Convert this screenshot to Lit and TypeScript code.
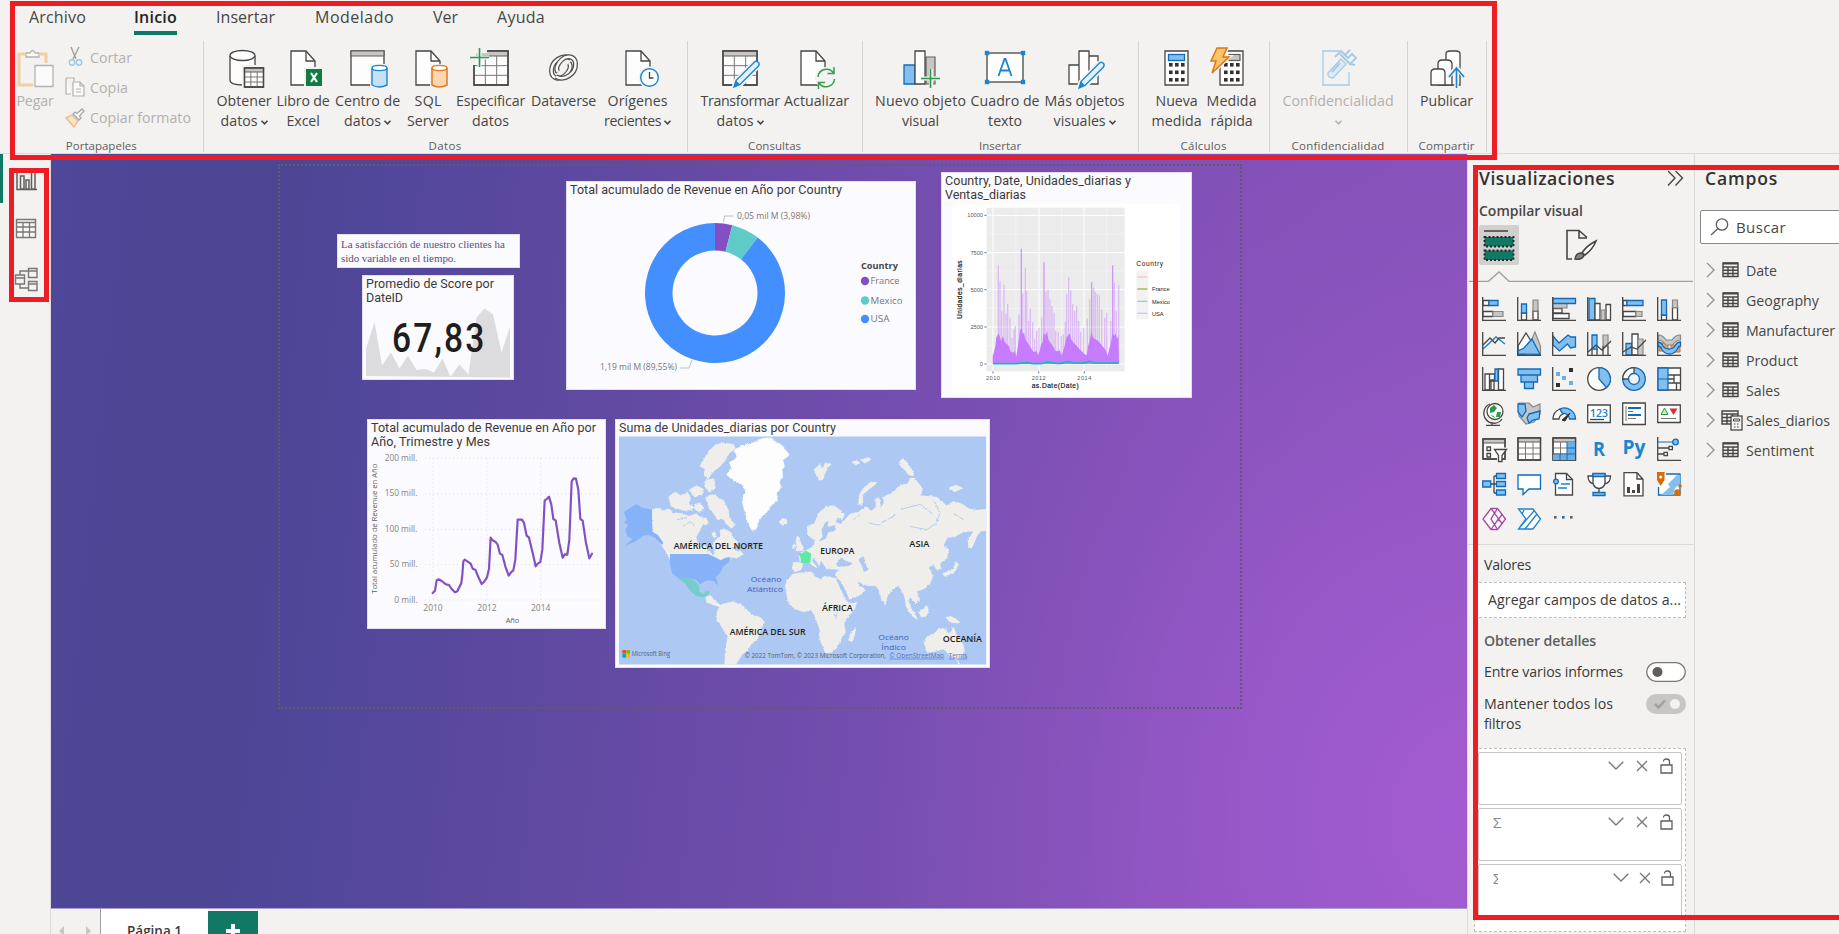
import { LitElement, html, svg, css, nothing } from "lit";
import { customElement, property } from "lit/decorators.js";
import { styleMap } from "lit/directives/style-map.js";

/** Single line of text whose tracking is computed so that it takes `w` pixels. */
@customElement("fit-text")
class FitText extends LitElement {
  @property({ type: Number }) w = 0;
  static styles = css`
    :host { display: inline-block; white-space: nowrap; }
  `;
  render() { return html`<slot></slot>`; }
  firstUpdated() {
    const n = (this.textContent || "").trim().length;
    const natural = this.getBoundingClientRect().width;
    if (n > 1 && this.w) this.style.letterSpacing = `${((this.w - natural) / n).toFixed(3)}px`;
  }
}

const fit = (t: string, w: number) => html`<fit-text .w=${w}>${t}</fit-text>`;

const table = (x: number, y: number, w: number, h: number, head = 6) => svg`
  <path class="w" d="M${x} ${y}h${w}v${h}h${-w}z"/>
  <path class="gg" d="M${x} ${y}h${w}v${head}h${-w}z"/>
  <path class="k t" d="M${x} ${y + head + (h - head) / 3}h${w}M${x} ${y + head + (h - head) * 2 / 3}h${w}M${x + w / 3} ${y + head}v${h - head}M${x + w * 2 / 3} ${y + head}v${h - head}"/>
  <path class="k" d="M${x} ${y}h${w}v${h}h${-w}z"/>`;
const pencil = svg`<path d="M35 14.500L16 34l-2 6 6-2L39 18" fill="none" stroke="#f3f2f1" stroke-width="5"/><path d="M34.500 15q1.500-1.500 3.500 0t.5 4L20 37.500l-6 2.500 2-6.500z" fill="#e3f0fa" stroke="#1a86d0" stroke-width="1.400"/><path d="M14 40l2-6.500 4 4z" fill="#1a86d0"/>`;
const calc = (x: number) => svg`<path class="w" d="M${x} 3h23v34h-23z"/>${[16, 23.5, 31].map(y => [4, 10, 16].map(d => svg`<rect x=${x + d} y=${y - 1} width="3.600" height="3.600" fill="#323130"/>`))}`;
const doc = svg`<path class="w" d="M4 3h15l9 10v24H4z"/><path class="k" d="M19 3v10h9"/>`;
const swirl = "M27 10.500C19 5.500 7 13 7.500 23.500c.5 7.500 8.500 8.500 13.500 4 5.500-5 6.500-10 4-12.500";

const RI: Record<string, unknown> = {
  pegar: svg`<path d="M10 6H4v31h14M25 6h6v9" fill="none" stroke="#f2cfa3" stroke-width="3"/><path d="M11 9V5h4q2.500-5 5 0h4v4z" fill="#fafafa" stroke="#b5b3b1" stroke-width="1.300"/><path d="M20 17.500h18v21H20z" fill="#fafafa" stroke="#b5b3b1" stroke-width="1.300"/>`,
  obtener: svg`<path class="w" d="M6 8v24q0 5 13 5 12 0 12-5V8"/><ellipse class="w" cx="18.500" cy="7.500" rx="12.500" ry="5"/><path d="M18 17h22v24H18z" fill="#f3f2f1"/>${table(20.5, 20, 19, 19, 4)}`,
  excel: svg`<path class="w" d="M8 3h15l9 10v24H8z" stroke="#797775"/><path class="k" d="M23 3v10h9"/><rect x="22" y="20" width="18" height="19" fill="#107c41" stroke="#f3f2f1" stroke-width="2"/><path d="M28 25l6 9M34 25l-6 9" stroke="#fff" stroke-width="2.200"/>`,
  centro: svg`<path class="w" d="M3 3h33v34H3z"/><path class="gg" d="M3 3h33v5H3z"/><path d="M22 16h20v24H22z" fill="#f3f2f1"/><path d="M24 20v17q7 4 15 0V20" fill="#c7e0f4" stroke="#1a86d0" stroke-width="1.400"/><ellipse cx="31.500" cy="20" rx="7.500" ry="2.600" fill="#fff" stroke="#1a86d0" stroke-width="1.400"/>`,
  sql: svg`<path class="w" d="M8 3h15l9 10v24H8z"/><path class="k" d="M23 3v10h9"/><path d="M22 16h20v24H22z" fill="#f3f2f1"/><path d="M24 20v17q7 4 15 0V20" fill="#fbd6b0" stroke="#e07b1a" stroke-width="1.500"/><ellipse cx="31.500" cy="20" rx="7.500" ry="2.600" fill="#fff" stroke="#e07b1a" stroke-width="1.400"/>`,
  espec: svg`${table(3, 3, 34, 34, 5)}<path d="M0 0h16v5H0zM0 5h5v12H0z" fill="#f3f2f1"/><path d="M8.500 0v19M0 9.500h18" stroke="#f3f2f1" stroke-width="4"/><path d="M8.500 0v19M-1 9.500h19" stroke="#2b9a4b" stroke-width="1.600"/>`,
  dataverse: svg`<g fill="none"><path d=${swirl} stroke="#55524f" stroke-width="5"/><path d=${swirl} stroke="#fbfbfb" stroke-width="2.400"/><g transform="rotate(180 19.500 19.500)"><path d=${swirl} stroke="#55524f" stroke-width="5"/><path d=${swirl} stroke="#fbfbfb" stroke-width="2.400"/></g></g>`,
  origenes: svg`<path class="w" d="M8 3h15l9 10v24H8z"/><path class="k" d="M23 3v10h9"/><circle cx="31.500" cy="29.500" r="11" fill="#f3f2f1"/><circle cx="31.500" cy="29.500" r="8.800" fill="#fafdff" stroke="#1a86d0" stroke-width="1.400"/><path class="k" d="M31.500 24v6h4"/>`,
  transformar: svg`${table(3, 3, 34, 34, 5)}<g transform="translate(0 -1)">${pencil}</g>`,
  actualizar: svg`${doc}<circle cx="29" cy="30" r="11" fill="#f3f2f1"/><path d="M21 29a8.500 8.500 0 0 1 15.500-4M37.500 31a8.500 8.500 0 0 1-15.500 4M37 19v6.500h-6.500M21.500 41v-6.500H28" fill="none" stroke="#3a9b50" stroke-width="1.500"/>`,
  nuevo: svg`<path class="b" d="M3 17h11v19H3z"/><path class="gg" d="M25 9h9v27h-9z" stroke="#797775"/><path class="w" d="M14 3h10v33H14z"/><path d="M20 30.500h20M30 21v20" stroke="#f3f2f1" stroke-width="4"/><path d="M20 30.500h19M29.500 21v19" stroke="#2b9a4b" stroke-width="1.600"/>`,
  cuadro: svg`<rect class="w" x="2" y="5" width="36" height="29"/>${[[2, 5], [38, 5], [2, 34], [38, 34]].map(p => svg`<rect x=${p[0] - 2.2} y=${p[1] - 2.2} width="4.400" height="4.400" fill="#1a86d0"/>`)}<path d="M13.500 28l6-17h1l6 17M15.500 22.500h9" fill="none" stroke="#1a86d0" stroke-width="1.800"/>`,
  mas: svg`<path class="w" d="M4 17h10v19H4zM24 8h9v28h-9zM14 3h10v33H14z"/>${pencil}`,
  nueva: svg`${calc(8)}<rect class="b" x="11.500" y="6.500" width="16" height="6"/>`,
  rapida: svg`${calc(8)}<rect class="gg" x="17" y="6.500" width="11" height="6" stroke="#797775"/><path d="M5 0h10l-4 9h6L0 25l4-12H-1z" stroke="#f3f2f1" stroke-width="4"/><path d="M5 0h10l-4 9h6L0 25l4-12H-1z" fill="#fbc36b" stroke="#d97a10" stroke-width="1.500"/>`,
  conf: svg`<g fill="none" stroke="#a6cbe4" stroke-width="1.300"><path d="M21 3H5v34h26V24"/><path d="M10 25l13-14 5 5-13 14q-6 0-5-5z" fill="#dcebf5"/><path d="M14 24l8-9M17 9l6-6 5 5M22 6l10 10 6-6-4-4-4 4-3-3 5-5M32 16l5 1" stroke-width="2"/></g>`,
  publicar: svg`<path class="w" d="M19 37V6q0-3 4-3h6q4 0 4 3v31z"/><path class="w" d="M11 37V16q0-4 4-4h5q5 0 5 4v21z"/><path class="w" d="M4 37V25q0-4 4-4h6q4 0 4 4v12z"/><path d="M29.500 41V19M21 29l8.500-9.500 8.500 9.500" fill="none" stroke="#f3f2f1" stroke-width="4.500"/><path d="M29.500 40V20M22 29l7.500-9 7.500 9" fill="none" stroke="#1a86d0" stroke-width="1.600"/>`,
};

type Btn = { w: number; i: string; a: [string, number]; b?: [string, number]; drop?: boolean; off?: boolean };
const GROUPS: { w: number; pad: number; label: [string, number]; btns: Btn[] }[] = [
  { w: 484, pad: 10, label: ["Datos", 33], btns: [
    { w: 61, i: "obtener", a: ["Obtener", 55], b: ["datos", 37], drop: true },
    { w: 57, i: "excel", a: ["Libro de", 53], b: ["Excel", 33] },
    { w: 72, i: "centro", a: ["Centro de", 65], b: ["datos", 37], drop: true },
    { w: 49, i: "sql", a: ["SQL", 27], b: ["Server", 42] },
    { w: 76, i: "espec", a: ["Especificar", 69], b: ["datos", 37] },
    { w: 70, i: "dataverse", a: ["Dataverse", 65] },
    { w: 78, i: "origenes", a: ["Orígenes", 60], b: ["recientes", 57], drop: true }] },
  { w: 175, pad: 12, label: ["Consultas", 53], btns: [
    { w: 81, i: "transformar", a: ["Transformar", 79], b: ["datos", 37], drop: true },
    { w: 72, i: "actualizar", a: ["Actualizar", 65] }] },
  { w: 276, pad: 9, label: ["Insertar", 42], btns: [
    { w: 98, i: "nuevo", a: ["Nuevo objeto", 91], b: ["visual", 37] },
    { w: 71, i: "cuadro", a: ["Cuadro de", 69], b: ["texto", 34] },
    { w: 88, i: "mas", a: ["Más objetos", 80], b: ["visuales", 52], drop: true }] },
  { w: 131, pad: 11, label: ["Cálculos", 46], btns: [
    { w: 54, i: "nueva", a: ["Nueva", 42], b: ["medida", 50] },
    { w: 56, i: "rapida", a: ["Medida", 50], b: ["rápida", 42] }] },
  { w: 138, pad: 9, label: ["Confidencialidad", 93], btns: [
    { w: 119, i: "conf", a: ["Confidencialidad", 111], b: ["", 0], drop: true, off: true }] },
  { w: 79, pad: 8, label: ["Compartir", 56], btns: [
    { w: 62, i: "publicar", a: ["Publicar", 53] }] },
];

const ax = svg`<path class="k" d="M.7 0V23.300H24"/>`;
const VI = [
  svg`<path class="w" d="M1 3.500h6v5H1zM1 14.500h10v5H1z"/><path class="b" d="M7 3.500h9v5H7z"/><path class="g" d="M11 14.500h10v5H11z"/>${ax}`,
  svg`<path class="w" d="M4.500 16h5v7h-5zM16 14h5v9h-5z"/><path class="b" d="M4.500 7h5v9h-5z"/><path class="g" d="M16 3h5v11h-5z"/>${ax}`,
  svg`<path class="w" d="M1 11.500h9v4.500H1zM1 16.500h16v5H1z"/><path class="g" d="M1 6.500h14v4.500H1z"/><path class="b" d="M1 1.500h22.500v5H1z"/>${ax}`,
  svg`<path class="b" d="M2 1.500h6v21.500H2z"/><path class="w" d="M8 6.500h5v16.500H8zM19 7.500h4.500v15.500H19z"/><path class="g" d="M14 13h4v10h-4z"/>${ax}`,
  svg`<path class="w" d="M1 3.500h4v5H1zM1 14.500h13v5H1z"/><path class="b" d="M5 3.500h16v5H5z"/><path class="g" d="M14 14.500h6v5h-6z"/>${ax}`,
  svg`<path class="w" d="M4.500 18h5v5h-5zM15.500 10.500h5v12.500h-5z"/><path class="b" d="M4.500 3h5v15h-5z"/><path class="g" d="M15.500 3h5v7.500h-5z"/>${ax}`,
  svg`<path d="M1 17L14 5l9 7" fill="none" stroke="#1a86d0" stroke-width="1.500"/><path class="k" d="M1 13l7-7 5 5 4-5h6"/>${ax}`,
  svg`<path class="g" d="M9 20L18 0l5.500 14V22z"/><path class="w" d="M1 14L9 1l8 13-8 8H1z"/><path class="b" d="M1 22v-3l6-3 8-9 8 15.300z"/>${ax}`,
  svg`<path class="b" d="M1 4l6 7 9-8 3 2h4.500v10l-5 1-3-4-8 7-6.500-6z"/>${ax}`,
  svg`<path class="b" d="M5 3h5v14H5z"/><path class="g" d="M16 3h5v11h-5z"/><path class="k" d="M5 17v6M10 17v6M16 14v9M21 14v9M1 20l8-7 6 5 9-9"/>${ax}`,
  svg`<path class="b" d="M4 11.500h6v11.500H4z"/><path class="w" d="M10 2h6v21h-6z"/><path class="g" d="M16 7h5v16h-5z"/><path class="k" d="M1 20l8-5 6 2 9-9"/>${ax}`,
  svg`<path d="M2 11h9v8H2zM14 13h9v7h-9z" fill="#f3a14f" stroke="#d86b0b"/><path class="g" d="M1 3q5 0 8 5h6q3-5 8.500-5v5q-4 0-8 5H9Q5 8 1 8z"/><path class="b" d="M1 10q3 0 5 4 2 3 6 3t6-3q2-4 5.500-4v4q-2 0-3 3-3 5-8 5t-8-5q-1-3-3.500-3z"/>${ax}`,
  svg`<path class="w" d="M3 7h4.500v16H3zM7.500 7h5v7h-5zM16.500 2h5v21h-5zM9 13h3v10H9z"/><path class="b" d="M13 2h3v12h-3z"/>${ax}`,
  svg`<path class="b" d="M1 2h22.500v6H1zM4 8h16.500v7H4zM7.500 15h9v6.500h-9z"/>`,
  svg`<rect x="17" y="1" width="4" height="4" fill="#323130"/><rect x="4" y="5" width="4" height="4" fill="#69afe5"/><rect x="10" y="9" width="4" height="4" fill="#69afe5"/><rect x="17" y="14" width="4" height="4" fill="#69afe5"/><rect x="4" y="16" width="4" height="4" fill="#323130"/>${ax}`,
  svg`<circle class="w" cx="12" cy="12" r="11.300"/><path class="b" d="M12 .7A11.300 11.300 0 0 1 19.500 20.500L12 12z"/>`,
  svg`<circle class="b" cx="12" cy="12" r="11.300"/><path class="w" d="M12 .7A11.300 11.300 0 0 0 .7 12H6.500A5.500 5.500 0 0 1 12 6.500z"/><circle cx="12" cy="12" r="5.500" fill="#f3f2f1" stroke="#0f6cbd" stroke-width="1.300"/>`,
  svg`<path class="w" d="M1 1h22.500v22H1z"/><path class="k" d="M11 8h12M11 16h12M17 8v8M19.500 16v7M11 12h6"/><path class="b" d="M1 1h10v22H1z"/><path d="M1 12h10" stroke="#0f6cbd"/>`,
  svg`<path class="k" d="M8 2a10 10 0 1 0 12 15M10 20v3M4 23.300h14"/><circle cx="13" cy="9.500" r="8" fill="#fff" stroke="#484644" stroke-width="1.300"/><path d="M8 6l4-3 3 3-3 4-4 1zM15 10l4 0-1 5-4 0zM8 13l4 1 1 2z" fill="#2b9a4b"/>`,
  svg`<path class="g" d="M2 1h10l4 4 7-3v10l-6 8-8 2-7-8z"/><path class="b" d="M1 2h7l1 7-4 6-4-5zM12 12l11-3-1 8-6 1-4 3-2-5z"/>`,
  svg`<path class="w" d="M1 17A11 11 0 0 1 8 7l3 5a6 6 0 0 0-4 5z"/><path class="b" d="M8 7a11 11 0 0 1 15.500 10h-6a6 6 0 0 0-7-5.500z"/><path d="M10 18l8-7-5 8z" fill="#323130" stroke="#323130"/>`,
  svg`<path class="w" d="M.7 3h22.600v17.500H.7z"/><text x="12" y="14.800" text-anchor="middle" textLength="18" font-size="10.500" font-weight="600" fill="#1a86d0">123</text><path class="k" d="M3 17.500h14" stroke="#797775"/>`,
  svg`<path class="w" d="M.7 1h22.600v21.500H.7z"/><path class="k t" d="M4 4v15" stroke="#797775"/><path d="M6 6h13M6 13h13" stroke="#0f6cbd" stroke-width="2"/><path class="k t" d="M6 9.500h5M6 16.500h8"/>`,
  svg`<path class="w" d="M.7 3h22.600v17.500H.7z"/><path d="M4 12.500L7.500 6l3.500 6.500z" fill="#c9e6cf" stroke="#2b9a4b"/><path d="M12.500 6.500h8L16.500 13z" fill="#d13438"/><path class="k t" d="M4 16.500h15"/>`,
  svg`<path class="w" d="M1 2h22v20H1z"/><path class="gg" d="M1 2h22v4H1z"/><path class="k" d="M1 2h22v20H1zM5 10h3.500v3.500H5zM5 16.500h3.500V20H5z" stroke-width="1"/><path d="M11 10.500h15L20 18v8h-5v-8z" fill="#f3f2f1"/><path class="w" d="M12.500 12.500h12l-4.500 6v6h-3.500v-6z"/>`,
  svg`${table(1, 1, 22.5, 22, 4)}`,
  svg`${table(1, 1, 22.5, 22, 4)}<path d="M15 5h8v18H1v-5h14z" fill="#69afe5"/><path d="M15 5v18M8 17v6M15 11h8M1 17h22" stroke="#0f6cbd"/>`,
  svg`<text x="12" y="19" text-anchor="middle" textLength="12" lengthAdjust="spacingAndGlyphs" font-size="20" font-weight="700" fill="#1a86d0">R</text>`,
  svg`<text x="12" y="17" text-anchor="middle" textLength="23" lengthAdjust="spacingAndGlyphs" font-size="19" font-weight="700" fill="#1a86d0">Py</text>`,
  svg`${ax}<path d="M1 5h16" stroke="#0f6cbd"/><circle cx="18.500" cy="5" r="2.800" class="b"/><path class="k" d="M1 11h11M1 17h6M12 9.300h3.400v3.400H12zM7 15.300h3.400v3.400H7z" stroke="#797775"/>`,
  svg`<path class="k" d="M8 12h4M12 4v17M12 4h3M12 12h3M12 21h3"/><path class="b" d="M.7 9h8v6h-8zM14.500 1.500h9v5h-9zM14.500 9.500h9v5h-9zM14.500 18h9v5h-9z"/>`,
  svg`<path d="M1 3h22.500v14H12l-6 5.500V17H1z" fill="#fff" stroke="#0f6cbd" stroke-width="1.300"/>`,
  svg`<path class="w" d="M3.500 1.500h11l6 6v15.500h-17z"/><path class="k" d="M14.500 1.500v6h6"/><circle cx="4" cy="9.500" r="2.300" class="b"/><path d="M9 12h9M6 16h9" stroke="#1a86d0" stroke-width="1.300"/>`,
  svg`<path class="w" d="M6 2h12v9q-1 5-6 5.500Q7 16 6 11zM6 4H1q0 7 6 8M18 4h5.500q0 7-6 8M12 16.500v4"/><path class="b" d="M6 1.500h12v3H6zM6 20.500h12v3H6z"/>`,
  svg`<path class="w" d="M2 .7h13l6 6.500v16.600H2z" stroke-width="2"/><path class="k" d="M15 1v6h6"/><path d="M5 15h3v6H5zM10 18h3v3h-3zM15 12h3v9h-3z" fill="#484644"/>`,
  svg`<path d="M9 2h14v21H1.500V15" fill="#fff" stroke="#0f6cbd" stroke-width="1.300"/><path d="M20 3l-9 9 2 3-9 8h12l2-7 5-4V3z" fill="#83beec"/><path d="M0 0h7.500v8L3.700 14 0 8z" fill="#d86b0b"/><circle cx="3.700" cy="5" r="1.500" fill="#fff"/><circle cx="20.500" cy="20.500" r="3.300" fill="#d86b0b"/><circle cx="23" cy="14" r="1.800" fill="#d86b0b"/>`,
  svg`<g fill="#fdf8fd" stroke="#a349a4" stroke-width="1.300"><path d="M9 1.500h6.500L23.500 12l-8 10.500H9L1 12z"/><path d="M9 1.500l3.500 4.500-3.500 6 3.500 5.500L9 22.500M15.500 1.500L9 12l6.500 10.500M12.500 6l4 6-4 5.500M12.500 6l3-4.500M16.500 12l4-5M16.500 12l4 5"/></g>`,
  svg`<g fill="#fff" stroke="#1f83d8" stroke-width="1.300"><path d="M1.500 2h14.500l7.500 10-7.500 10H1.500L9 12z"/><path d="M3 20L17 4M8 22L20 7M5 7l2-4" fill="none"/></g>`,
  svg`<rect x="2" y="9" width="2.600" height="2.600" fill="#605e5c"/><rect x="10" y="9" width="2.600" height="2.600" fill="#2b6a9b"/><rect x="18" y="9" width="2.600" height="2.600" fill="#605e5c"/>`,
];

const FIELDS: [string, number][] = [["Date", 31], ["Geography", 73], ["Manufacturer", 89], ["Product", 52], ["Sales", 34], ["Sales_diarios", 84], ["Sentiment", 68]];

const SPIKES = [[236, 318], [241, 367], [246, 455], [253, 377], [259, 462], [264, 433], [271, 475], [277, 535], [283, 510], [287, 500], [298, 465], [305, 268], [309, 403], [317, 325], [321, 395], [327, 485], [332, 447], [339, 488], [345, 540], [351, 515], [358, 505], [366, 475], [373, 308], [379, 397], [385, 390], [391, 420], [397, 440], [403, 460], [408, 515], [416, 518], [425, 530], [431, 525], [437, 487], [441, 405], [447, 354], [453, 393], [459, 435], [465, 455], [471, 440], [477, 485], [483, 518], [492, 505], [503, 478], [510, 420], [516, 369], [522, 387], [527, 397], [533, 403], [539, 408], [546, 450], [555, 475], [561, 460], [573, 485], [579, 318], [584, 370], [590, 455], [597, 377]];

@customElement("app-root")
class AppRoot extends LitElement {
  static styles = css`
    :host { display: block; width: 1839px; height: 934px; overflow: hidden; position: relative; background: #f3f2f1; color: #484644; font-family: "Open Sans", "Noto Sans", sans-serif; font-size: 14px; }
    * { box-sizing: border-box; }
    svg { display: block; overflow: visible; flex: none; }
    svg.cut { overflow: hidden; }
    .w { fill: #fdfdfd; stroke: #484644; stroke-width: 1.3; }
    .k { fill: none; stroke: #484644; stroke-width: 1.3; }
    .t { stroke-width: 1; stroke: #797775; }
    .gg { fill: #c8c6c4; stroke: #605e5c; stroke-width: 1.2; }
    .g { fill: #c8c6c4; stroke: #8a8886; stroke-width: 1.2; }
    .b { fill: #83beec; stroke: #0f6cbd; stroke-width: 1.3; }

    .head { height: 154px; display: flex; flex-direction: column; border-bottom: 1px solid #dddbd9; }
    .tabs { height: 41px; display: flex; padding: 5px 0 0 29px; font-size: 16px; line-height: 24px; color: #484644; }
    .tab { height: 30px; margin-right: 39px; }
    .tab.mod { margin-left: 1px; }
    .tab.on { margin-left: 9px; font-weight: 600; color: #252423; border-bottom: 4px solid #117865; }
    .ribbon { height: 111px; display: flex; }
    .group { border-right: 1px solid #d5d3d1; display: flex; flex-direction: column; flex: none; }
    .row { height: 95px; display: flex; }
    .glabel { text-align: center; font-size: 11.500px; line-height: 20px; height: 16px; color: #605e5c; }
    .clip { width: 203.600px; }
    .btn { display: flex; flex-direction: column; align-items: center; padding-top: 7px; font-size: 14.200px; line-height: 20px; }
    .icon { margin-bottom: 3px; }
    .line { display: flex; align-items: center; gap: 3px; height: 20px; }
    .line svg { margin-top: 2px; }
    .off { color: #b3b0ad; }
    .paste { width: 42px; margin-left: 14px; }
    .cmds { margin-left: 9px; display: flex; flex-direction: column; color: #b3b0ad; padding-top: 1px; }
    .cmd { height: 30.300px; display: flex; align-items: center; gap: 5px; font-size: 14.200px; }

    .body { height: 780px; display: flex; }
    .nav { width: 51px; border-right: 1px solid #dcdad8; display: flex; flex: none; }
    .mark { width: 3px; height: 49px; background: #117865; }
    .views { padding: 14px 0 0 12px; display: flex; flex-direction: column; gap: 21px; }
    .center { width: 1416px; display: flex; flex-direction: column; flex: none; }
    .canvas { height: 755px; flex: none; position: relative; background: radial-gradient(ellipse 42% 95% at 100% 88%, rgba(165, 92, 210, .95) 0%, rgba(163, 92, 209, .7) 32%, rgba(160, 90, 205, .28) 68%, rgba(160, 90, 205, 0) 100%), linear-gradient(96deg, #4f4799 0%, #4b4592 14%, #51479a 22%, #5c499f 34%, #6a4ba8 48%, #784fb1 63%, #8251b8 80%, #8653ba 100%); border-bottom: 1px solid #a79fd0; }
    .page { position: absolute; left: 227px; top: 10px; width: 964px; height: 545px; border: 2px dotted #605b66; }
    .card { position: absolute; background: #fbfafe; border: 1px solid #e3def2; font-family: Roboto, sans-serif; font-size: 12.500px; line-height: 13.500px; color: #3b3937; padding: 1px 3px; display: flex; flex-direction: column; align-items: flex-start; }
    .card svg.chart { position: absolute; left: -1px; top: -1px; }
    .c-note { left: 286px; top: 80px; width: 183px; height: 34px; font-family: "Liberation Serif", serif; font-size: 11px; line-height: 14px; color: #57527a; padding: 2px 3px; }
    .c-score { left: 311px; top: 121px; width: 152px; height: 105px; }
    .c-donut { left: 515px; top: 27px; width: 350px; height: 209px; }
    .c-r { left: 890px; top: 18px; width: 251px; height: 226px; }
    .c-line { left: 316px; top: 265px; width: 239px; height: 210px; }
    .c-map { left: 564px; top: 265px; width: 375px; height: 249px; }
    .pages { height: 25px; flex: none; overflow: hidden; display: flex; font-size: 13.500px; font-weight: 600; color: #3b3a39; }
    .arrows { width: 50px; padding: 17px 0 0 8px; border-right: 1px solid #a19f9d; }
    .ptab { width: 107px; background: #fff; text-align: center; line-height: 20px; padding-top: 12px; }
    .plus { width: 50px; margin-top: 2px; background: #117865; padding: 13px 0 0 18px; }

    .vis { width: 228px; flex: none; height: 780px; border-left: 1px solid #dcdad8; border-right: 1px solid #dcdad8; display: flex; flex-direction: column; }
    .vis > * { flex: none; }
    .vh { height: 45px; padding: 11px 10px 0 11px; display: flex; justify-content: space-between; font-size: 17.500px; font-weight: 600; line-height: 27px; color: #323130; }
    .vs { height: 26px; padding-left: 11px; font-size: 14px; font-weight: 600; line-height: 24px; }
    .modes { height: 46px; display: flex; padding-left: 11px; gap: 47px; }
    .mode { width: 40px; height: 40px; background: #d2d0ce; border-radius: 2px; padding: 4px; }
    .grid { height: 262px; padding: 15px 0 0 14px; display: grid; grid-template-columns: repeat(6, 24px); grid-auto-rows: 24px; gap: 11px; }
    .wells { border-top: 1px solid #dcdad8; display: flex; flex-direction: column; padding: 10px 8px 0 6px; font-size: 14.200px; line-height: 20px; color: #3b3a39; }
    .wells > * { flex: none; }
    .lab { padding-left: 10px; height: 27px; }
    .drop { height: 36px; background: #fff; border: 1.500px dashed #c0bebc; padding: 7px 0 0 13px; }
    .h { font-weight: 600; margin-top: 13px; height: 31px; color: #605e5c; }
    .opt { display: flex; justify-content: space-between; padding-left: 10px; height: 32px; }
    .opt.tall { height: 54px; }
    .stack { height: 184px; border: 1.500px dashed #c0bebc; background: #fff; padding: 3px; display: flex; flex-direction: column; gap: 3px; }
    .item { height: 53px; border: 1px solid #c8c6c4; border-radius: 2px; display: flex; flex: none; padding-top: 5px; justify-content: space-between; }
    .sum { font-size: 15px; line-height: 14px; padding: 1px 0 0 14px; color: #8a8886; }
    .tools { display: flex; gap: 12px; padding-right: 8px; align-items: center; height: 15px; margin-left: auto; }
    .tools.narrow { gap: 10px; padding-right: 7px; }
    .cutoff { width: 19px; overflow: hidden; }

    .fields { width: 144px; flex: none; padding-left: 5px; display: flex; flex-direction: column; overflow: hidden; }
    .fh { height: 56px; padding: 11px 0 0 5px; font-size: 17.500px; font-weight: 600; line-height: 27px; color: #323130; flex: none; }
    .search { width: 160px; height: 34px; background: #fff; border: 1px solid #8a8886; border-radius: 2px; display: flex; align-items: center; gap: 7px; padding-left: 9px; font-size: 15px; flex: none; }
    .list { padding-top: 11px; }
    .f { height: 30px; display: flex; align-items: center; padding-left: 6px; font-size: 14.200px; }
    .chev { margin-right: 6px; }
    .ic { width: 24px; margin-left: 1px; }

    .frame { position: absolute; border: 5px solid #ee1c25; }
    .fr1 { left: 10px; top: 1px; width: 1487px; height: 159px; }
    .fr2 { left: 9px; top: 168px; width: 40px; height: 134px; }
    .fr3 { left: 1473px; top: 165px; width: 380px; height: 755px; }
  `;

  button(b: Btn) {
    return html`<div class="btn ${b.off ? "off" : ""}" style=${styleMap({ width: `${b.w}px` })}>
      <svg class="icon" width="40" height="40" viewBox="0 0 40 40">${RI[b.i]}</svg>
      <div class="line">${fit(b.a[0], b.a[1])}</div>
      ${b.b ? html`<div class="line">${b.b[0] ? fit(b.b[0], b.b[1]) : nothing}${b.drop ? html`<svg width="7" height="5" viewBox="0 0 7 5"><path d="M.5 .8L3.500 3.800 6.500 .8" fill="none" stroke="currentColor" stroke-width="1.600"/></svg>` : nothing}</div>` : nothing}
    </div>`;
  }

  head() {
    const tabs: [string, number, string][] = [["Archivo", 57, ""], ["Inicio", 43, "on"], ["Insertar", 59, ""], ["Modelado", 79, "mod"], ["Ver", 25, ""], ["Ayuda", 48, ""]];
    return html`<div class="head">
      <div class="tabs">${tabs.map(t => html`<div class="tab ${t[2]}">${fit(t[0], t[1])}</div>`)}</div>
      <div class="ribbon">
        <div class="group clip">
          <div class="row">
            <div class="btn off paste"><svg class="icon" width="40" height="40" viewBox="0 0 40 40">${RI.pegar}</svg><div class="line">${fit("Pegar", 37)}</div></div>
            <div class="cmds">
              <div class="cmd"><svg width="20" height="20" viewBox="0 0 20 20"><path d="M6 0l5 12M14 0L8 12" stroke="#a19f9d" stroke-width="1.400"/><circle cx="7" cy="15.500" r="2.700" fill="none" stroke="#9cc8e6" stroke-width="1.400"/><circle cx="14" cy="15.500" r="2.700" fill="none" stroke="#9cc8e6" stroke-width="1.400"/></svg>${fit("Cortar", 42)}</div>
              <div class="cmd"><svg width="20" height="20" viewBox="0 0 20 20" fill="#fafafa" stroke="#b3b0ad" stroke-width="1.200"><path d="M1 1h8v3M1 1v16h5"/><path d="M8 5h7l4 4v10H8zM15 5v4h4M11 12h5M11 15h5"/></svg>${fit("Copia", 38)}</div>
              <div class="cmd"><svg width="20" height="20" viewBox="0 0 20 20"><path d="M1 10l6-3 6 6-4 6z" fill="#fbe3c6" stroke="#eebd88" stroke-width="1.400"/><path d="M8 6l6 6 2-2-1.500-2L19 3l-2-2-5 4.500-2-1.500z" fill="#fafafa" stroke="#a8a5a2" stroke-width="1.300"/></svg>${fit("Copiar formato", 101)}</div>
            </div>
          </div>
          <div class="glabel">${fit("Portapapeles", 71)}</div>
        </div>
        ${GROUPS.map(g => html`<div class="group" style=${styleMap({ width: `${g.w}px` })}>
          <div class="row" style=${styleMap({ paddingLeft: `${g.pad}px` })}>${g.btns.map(b => this.button(b))}</div>
          <div class="glabel">${fit(g.label[0], g.label[1])}</div>
        </div>`)}
      </div>
    </div>`;
  }

  donut() {
    const c = [149, 112], R = 70, r = 42.5;
    const p = (a: number, q: number) => `${(c[0] + q * Math.sin(a * Math.PI / 180)).toFixed(2)} ${(c[1] - q * Math.cos(a * Math.PI / 180)).toFixed(2)}`;
    const arc = (a: number, b: number, col: string) => svg`<path fill=${col} d="M${p(a, R)}A${R} ${R} 0 ${b - a > 180 ? 1 : 0} 1 ${p(b, R)}L${p(b, r)}A${r} ${r} 0 ${b - a > 180 ? 1 : 0} 0 ${p(a, r)}z"/>`;
    const leg: [string, string, number, number][] = [["France", "#8250c4", 100, 29], ["Mexico", "#5ecbc8", 119.5, 32], ["USA", "#438fff", 138, 19]];
    return html`<div class="card c-donut">${fit("Total acumulado de Revenue en Año por Country", 272)}
      <svg class="chart" width="350" height="209" font-family="Open Sans" font-size="8.500" fill="#7a7876">
        ${arc(0, 14.3, "#8250c4")}${arc(14.3, 37.6, "#5ecbc8")}${arc(37.6, 360, "#438fff")}
        <path d="M157.500 41l1-6h9M114 187h9l3-8" fill="none" stroke="#c0bebc"/>
        <text x="171" y="38" textLength="73" lengthAdjust="spacingAndGlyphs">0,05 mil M (3,98%)</text>
        <text x="34" y="189" textLength="77" lengthAdjust="spacingAndGlyphs">1,19 mil M (89,55%)</text>
        <text x="295" y="88" font-weight="700" fill="#484644" textLength="37" lengthAdjust="spacingAndGlyphs" font-size="9">Country</text>
        ${leg.map(l => svg`<circle cx="299" cy=${l[2]} r="4.200" fill=${l[1]}/><text x="304.500" y=${l[2] + 3} font-size="9" textLength=${l[3]} lengthAdjust="spacingAndGlyphs">${l[0]}</text>`)}
      </svg></div>`;
  }

  rplot() {
    const ys: [string, number][] = [["10000", 168], ["7500", 280], ["5000", 391], ["2500", 503], ["0", 614]];
    const leg: [string, string, number][] = [["", "#f5c6c2", 353], ["France", "#9aba3c", 389], ["Mexico", "#7fd9dd", 426], ["USA", "#dcc0fb", 462]];
    return html`<div class="card c-r">${fit("Country, Date, Unidades_diarias y", 186)}${fit("Ventas_diarias", 81)}
      <svg class="chart" width="251" height="226" viewBox="64 38 753 678" font-family="Liberation Sans" font-size="17" fill="#5a5a5a">
        <rect x="98" y="133" width="683" height="570" fill="#fff"/>
        <rect x="201" y="145" width="414" height="491" fill="#ebebeb"/>
        <path d="M201 168h414M201 280h414M201 391h414M201 503h414M201 614h414M220 145v491M358 145v491M493 145v491" stroke="#fff" stroke-width="3"/>
        <path d="M201 224h414M201 335h414M201 447h414M201 559h414M289 145v491M426 145v491M561 145v491" stroke="#f7f7f7" stroke-width="2"/>
        ${SPIKES.map((s, i) => svg`<path d="M${s[0]} ${s[1]}V612" stroke="#c77cff" stroke-width="4" opacity=${[11, 22, 44, 53].includes(i) ? 0.75 : 0.42}/>`)}
        <path fill="#c77cff" d="M219 614V590L223 578 227 560 230 534 234 528 236 522 240 530 244 545 250 530 255 548 262 555 268 560 272 576 280 580 286 575 290 592 294 565 298 538 301 512 306 508 309 525 313 520 317 540 322 548 328 556 335 568 342 578 350 575 355 588 360 575 364 555 369 548 372 520 377 528 382 515 386 540 392 550 400 560 407 574 415 576 420 572 426 590 431 572 436 555 440 535 446 528 450 522 454 540 462 550 470 558 478 568 486 576 494 584 501 588 505 560 510 545 515 515 520 535 528 540 536 545 544 555 552 565 558 572 564 590 569 568 574 550 578 522 584 530 588 522 592 540 596 528 598 614z"/>
        <path d="M220 613h70l30-3 20 3h25l20-5 25 4h15l18-5 22 4h25l20-5 15 5h73" stroke="#14b8c4" stroke-width="5" fill="none"/>
        ${ys.map(y => svg`<text x="190" y=${y[1] + 6} text-anchor="end">${y[0]}</text><path d="M194 ${y[1]}h7" stroke="#333" stroke-width="2"/>`)}
        ${[["2010", 220], ["2012", 357], ["2014", 494]].map(x => svg`<text x=${x[1]} y="661" text-anchor="middle" textLength="42">${x[0]}</text><path d="M${x[1]} 636v6" stroke="#333" stroke-width="2"/>`)}
        <text x="336" y="687" font-size="20" fill="#111" stroke="#111" stroke-width=".5" textLength="141">as.Date(Date)</text>
        <text transform="translate(127 479) rotate(-90)" font-size="20" fill="#111" stroke="#111" stroke-width=".5" textLength="176">Unidades_diarias</text>
        <text x="650" y="321" font-size="20" fill="#111" textLength="80">Country</text>
        <rect x="650" y="335" width="36" height="145" fill="#f2f2f2"/>
        ${leg.map(l => svg`<path d="M653 ${l[2]}h30" stroke=${l[1]} stroke-width="4"/>${l[0] ? svg`<text x="697" y=${l[2] + 7} fill="#222">${l[0]}</text>` : nothing}`)}
      </svg></div>`;
  }

  lineChart() {
    const y: [string, number, number, number][] = [["200 mill.", 146, 104, 98], ["150 mill.", 252, 104, 98], ["100 mill.", 359, 104, 98], ["50 mill.", 465, 119, 84], ["0 mill.", 571, 133, 70]];
    return html`<div class="card c-line">${fit("Total acumulado de Revenue en Año por", 225)}${fit("Año, Trimestre y Mes", 119)}
      <svg class="chart" width="239" height="210" viewBox="51 28 717 630" font-family="Open Sans" font-size="25" fill="#85827f">
        <path d="M225 146h520M225 252h520M225 359h520M225 465h520M225 571h520M249 146v425M411 146v425M572 146v425" stroke="#dddbe3" stroke-width="3" stroke-dasharray="3 9"/>
        ${y.map(l => svg`<text x=${l[2]} y=${l[1] + 8} textLength=${l[3]} lengthAdjust="spacingAndGlyphs">${l[0]}</text>`)}
        ${[["2010", 249], ["2012", 411], ["2014", 572]].map(l => svg`<text x=${l[1]} y="605" text-anchor="middle" textLength="58" lengthAdjust="spacingAndGlyphs">${l[0]}</text>`)}
        <text x="467" y="641" font-size="19" fill="#605e5c" textLength="41" lengthAdjust="spacingAndGlyphs">Año</text>
        <text transform="translate(81 552) rotate(-90)" font-size="20" fill="#605e5c" textLength="390" lengthAdjust="spacingAndGlyphs">Total acumulado de Revenue en Año</text>
        <polyline fill="none" stroke="#8250c4" stroke-width="6.500" stroke-linejoin="round" stroke-linecap="round" points="248,550 255,543 260,512 267,509 275,514 288,524 297,526 305,538 315,548 322,545 334,520 337,495 340,455 344,450 352,455 362,462 368,477 376,480 384,500 395,523 402,517 411,503 417,478 422,384 428,392 436,396 443,405 450,432 457,436 466,470 476,498 483,488 490,482 496,450 503,330 516,330 522,340 530,378 537,384 548,430 557,470 564,461 571,457 577,420 584,273 590,268 597,261 604,285 610,328 617,332 628,400 638,444 644,434 652,435 658,390 665,215 671,206 678,207 685,240 691,328 698,333 708,400 718,446 726,432"/>
      </svg></div>`;
  }

  map() {
    return html`<div class="card c-map">${fit("Suma de Unidades_diarias por Country", 217)}
      <svg class="chart" width="375" height="249" viewBox="45 28 1125 747" font-family="Open Sans" font-weight="600" font-size="24" fill="#1f1f1f">
        <filter id="coast" x="0" y="0" width="1" height="1"><feTurbulence type="fractalNoise" baseFrequency=".16" numOctaves="2" seed="4"/><feDisplacementMap in="SourceGraphic" scale="8" xChannelSelector="R" yChannelSelector="G"/></filter>
        <svg class="cut" x="57" y="80" width="1102" height="685" viewBox="57 80 1102 685">
        <rect x="57" y="80" width="1102" height="685" fill="#adc8f2"/>
        <g fill="#efeeea" stroke="#f6f5f1" stroke-width="1.500" stroke-linejoin="round" filter="url(#coast)">
          <path d="M156 300L178 296 190 304 205 296 218 308 244 312 268 320 290 312 300 322 318 326 324 338 316 352 296 366 288 384 294 400 318 412 330 428 340 440 344 424 338 410 346 392 362 378 360 362 374 358 392 368 400 386 412 394 410 408 394 414 408 424 422 424 428 434 410 446 398 442 384 452 370 458 356 452H212L198 426 176 394 160 376z"/>
          <path d="M206 262L226 246 242 258 262 248 272 266 266 284 286 294 262 304 236 298 214 290zM268 240L290 228 310 238 306 256 282 262zM300 170L314 146 326 124 346 106 368 100 400 104 406 118 386 132 376 152 358 172 338 186 324 208 310 194 316 178zM318 212L342 206 346 236 326 246 314 230zM318 262L340 254 356 264 374 278 384 300 388 322 404 346 396 356 380 344 366 326 352 330 340 310 330 300 322 280zM284 284L300 280 312 296 300 308 286 300zM330 372L344 366 350 380 336 388z"/>
          <path fill="#fdfdfd" stroke="#fff" d="M380 196L394 174 388 158 404 150 412 138 402 124 424 108 446 104 466 96 488 86 514 84 526 96 548 108 568 136 556 146 548 150 554 170 546 180 548 200 538 216 544 232 530 252 532 272 512 290 500 308 484 322 474 340 468 358 456 362 444 340 436 310 428 282 430 256 438 246 426 224 400 212z"/>
          <path d="M540 334L548 326 560 330 560 340 548 348 540 342zM642 180L660 164 666 178 676 160 692 162 682 178 674 192 668 210 658 212 650 198zM756 158L768 152 780 160 768 166zM782 150L808 144 812 150 794 160zM776 284L778 256 790 236 812 218 828 218 824 226 804 240 788 258 788 278 784 286zM898 156L910 146 922 160 938 184 940 198 926 196 912 178 902 170zM1046 234L1068 226 1088 236 1064 246z"/>
          <path d="M624 376L622 352 646 338 654 312 680 290 700 288 718 300 734 314 726 330 712 322 706 338 722 344 740 324 752 312 775 308 798 290 815 304 830 290 826 268 838 264 842 296 852 280 850 262 880 248 900 228 926 220 930 206 944 206 968 238 960 258 985 260 1010 262 1040 288 1060 276 1085 282 1108 298 1130 302 1170 298V362L1142 364 1130 380 1118 408 1106 414 1104 392 1122 364 1090 366 1066 380 1042 384 1030 406 1046 420 1040 446 1018 462 1024 478 1010 482 1002 464 986 472 998 500 990 522 970 538 950 545 958 572 946 580 932 562 924 572 936 604 940 618 928 604 918 580 912 556 898 528 886 532 872 546 862 560 856 586 844 568 836 540 826 528 806 528 790 524 770 512 778 530 796 542 776 558 745 570 730 540 715 510 706 492 718 480 700 478 680 478 674 468 662 450 658 470 650 456 640 444 636 454 652 474 640 470 628 458 608 462 604 480 584 486 578 476 580 458 600 458 598 438 612 424 634 416 642 404 646 390 638 388z"/>
          <path d="M588 396L592 380 600 384 598 396 610 412 608 422 588 424 592 412zM576 410L584 402 588 410 580 418z"/>
          <path d="M556 530L562 512 578 494 596 490 636 486 642 500 664 510 672 500 706 506 722 540 736 570 748 582 770 578 764 598 744 622 732 638 736 668 720 694 710 716 694 728 676 730 668 708 658 686 660 660 652 640 646 620 634 602 610 606 582 596 564 576zM746 692L752 670 766 656 764 676 756 696z"/>
          <path d="M314 562L332 558 344 572 360 586 374 582 398 576 424 586 440 600 454 614 484 626 494 636 480 664 472 690 454 702 442 722 424 736 414 754 400 776H374L376 720 384 680 368 656 350 628 352 604 360 592 342 586 322 578z"/>
          <path d="M972 698L980 682 1004 670 1018 656 1036 658 1038 668 1052 672 1060 652 1070 678 1088 702 1094 724 1082 742 1070 752 1052 738 1030 718 1000 726 982 728zM1038 622L1058 622 1080 638 1066 642 1046 634zM916 582L930 594 946 614 952 630 936 618 924 600zM956 606L968 598 980 588 986 602 978 620 964 622zM1028 492L1042 486 1060 478 1068 456 1074 464 1066 484 1050 494 1034 500zM1108 384L1118 374 1132 364 1126 386 1116 412 1108 414zM1072 754L1080 760 1076 765z"/>
        </g>
        <g filter="url(#coast)">
        <path d="M656 396L668 380 664 362 676 338 686 334 682 352 706 346 708 362 686 368 676 388zM708 464L722 446 736 452 758 462 744 470 716 472zM776 448L790 440 796 458 804 482 792 486 784 466zM314 372L300 360 310 344 330 352 336 376 346 392 334 400 322 390z" fill="#adc8f2"/>
        <path d="M760 330l20-14M806 340l30 6 50-30M900 300l60-16 40 30M1000 270l20 40-10 30M930 350l50 10 30-20M1060 310l30 20M230 330l30-6M250 350l20-14 14 10M320 425l12-6 12 10M710 590v14M704 612l6 14" fill="none" stroke="#adc8f2" stroke-width="2.500"/>
        <path d="M714 510L726 536 740 562 746 570 736 546 722 518z" fill="#adc8f2" stroke="#adc8f2" stroke-width="4"/>
        </g>
        <path d="M72 308L86 298 108 284 128 294 156 300V366L174 376 190 400 186 406 164 384 146 376 130 378 104 396 74 410 98 388 82 380 76 360 84 346 72 338 80 330z" fill="#86b2f8"/>
        <path d="M210 433H324L344 442 362 452 376 444 392 442 386 458 370 470 362 488 348 502 354 528 342 514 320 512 300 524 288 510 264 506 234 504 216 490 210 462z" fill="#86b2f8"/>
        <path d="M232 504L266 506 284 514 298 528 298 546 310 554 318 544 330 546 322 558 310 564 288 558 268 542 258 524 246 514z" fill="#74cdcc"/>
        <path d="M596 434L608 430 616 422 634 432 632 444 632 458 616 462 602 460 602 444z" fill="#5eeaa4"/>
        </svg>
        <text x="221" y="419" textLength="268" lengthAdjust="spacingAndGlyphs">AMÉRICA DEL NORTE</text>
        <text x="661" y="433" textLength="102" lengthAdjust="spacingAndGlyphs">EUROPA</text>
        <text x="928" y="411" textLength="60" lengthAdjust="spacingAndGlyphs">ASIA</text>
        <text x="666" y="604" textLength="92" lengthAdjust="spacingAndGlyphs">ÁFRICA</text>
        <text x="389" y="676" textLength="228" lengthAdjust="spacingAndGlyphs">AMÉRICA DEL SUR</text>
        <text x="1028" y="697" textLength="118" lengthAdjust="spacingAndGlyphs">OCEANÍA</text>
        <g font-weight="400" fill="#3f63bd" text-anchor="middle"><text x="498" y="516" textLength="92" lengthAdjust="spacingAndGlyphs">Océano</text><text x="495" y="547" textLength="108" lengthAdjust="spacingAndGlyphs">Atlántico</text><text x="881" y="690" textLength="92" lengthAdjust="spacingAndGlyphs">Océano</text><text x="881" y="720" textLength="74" lengthAdjust="spacingAndGlyphs">Índico</text></g>
        <path d="M67 721h11v11H67z" fill="#f25022"/><path d="M79 721h11v11H79z" fill="#7fba00"/><path d="M67 733h11v11H67z" fill="#00a4ef"/><path d="M79 733h11v11H79z" fill="#ffb900"/>
        <g font-weight="400" font-size="19" fill="#55606f"><text x="95" y="739" textLength="115" lengthAdjust="spacingAndGlyphs">Microsoft Bing</text><text x="434" y="744" textLength="424" lengthAdjust="spacingAndGlyphs">© 2022 TomTom, © 2023 Microsoft Corporation,</text><text x="868" y="744" textLength="164" lengthAdjust="spacingAndGlyphs" text-decoration="underline" fill="#5577b8">© OpenStreetMap</text><text x="1046" y="744" textLength="56" lengthAdjust="spacingAndGlyphs" text-decoration="underline" fill="#5577b8">Terms</text></g>
      </svg></div>`;
  }

  item(sum: string, narrow = false) {
    return html`<div class="item">${sum ? html`<div class="sum ${narrow ? "cutoff" : ""}">${sum}</div>` : nothing}
      <div class="tools ${narrow ? "narrow" : ""}" >
        <svg width="16" height="9" viewBox="0 0 16 9"><path d="M.7 .7L8 8 15.300 .7" fill="none" stroke="#797775" stroke-width="1.300"/></svg>
        <svg width="12" height="12" viewBox="0 0 12 12"><path d="M1 1l10 10M11 1L1 11" stroke="#797775" stroke-width="1.300"/></svg>
        <svg width="13" height="16" viewBox="0 0 13 16"><path d="M1 7h11v8H1zM3.500 3.500Q3.500 1 6.500 1T9.500 3.500V7" fill="none" stroke="#605e5c" stroke-width="1.300"/></svg>
      </div></div>`;
  }

  render() {
    return html`
      ${this.head()}
      <div class="body">
        <div class="nav"><div class="mark"></div>
          <div class="views">
            <svg width="22" height="21" viewBox="0 0 22 21"><path d="M2 0v21.500h20M5.500 8h3.500v13H5.500zM11 12h3v9h-3zM16.500 4h3.500v17h-3.500z" fill="none" stroke="#605e5c" stroke-width="1.500"/></svg>
            <svg width="22" height="30" viewBox="0 0 22 30"><path d="M1.500 9.500h19v18h-19z" fill="#f8f8f8" stroke="#797775" stroke-width="1.400"/><path d="M1.500 12.500h19M1.500 17h19M1.500 22h19M8 12v15M14.500 12v15" stroke="#797775" stroke-width="1.300"/></svg>
            <svg width="22" height="30" viewBox="0 0 22 30"><path d="M13.500 7.500h8.500v9h-8.500zM13.500 20.500h8.500v9h-8.500zM.5 14h9v9H.5zM13.500 10h8.500M13.500 23h8.500M.5 17h9M5 14v-4h8.500M5 23v4h8.500" fill="none" stroke="#797775" stroke-width="1.400"/></svg>
          </div>
        </div>
        <div class="center">
          <div class="canvas">
            <div class="page"></div>
            <div class="card c-note">${fit("La satisfacción de nuestro clientes ha", 164)}${fit("sido variable en el tiempo.", 115)}</div>
            <div class="card c-score">${fit("Promedio de Score por", 128)}${fit("DateID", 37)}
              <svg class="chart" width="152" height="105"><path fill="#dcdbde" d="M4 101V74l8.500-27L20 90.500l9-13 8.500 16 8.500-13 8.500 14.500 9-1 8.500 3.500 8.500-14 8 18 9-12 9 10 8-57 8-9 8.500 6 8.500 38 8.500-26v51z"/>
              <text transform="translate(30 77) scale(.84 1)" font-family="Roboto" font-size="40" font-weight="500" fill="#1f1e1d" textLength="110">67,83</text></svg>
            </div>
            ${this.donut()}${this.rplot()}${this.lineChart()}${this.map()}
          </div>
          <div class="pages">
            <div class="arrows"><svg width="34" height="10" viewBox="0 0 34 10"><path d="M5 0v10L0 5zM27 0v10l5-5z" fill="#c8c6c4"/></svg></div>
            <div class="ptab">${fit("Página 1", 55)}</div>
            <div class="plus"><svg width="14" height="14" viewBox="0 0 14 14"><path d="M7 0v14M0 7h14" stroke="#fff" stroke-width="4"/></svg></div>
          </div>
        </div>
        <div class="vis">
          <div class="vh">${fit("Visualizaciones", 136)}<svg width="17" height="27" viewBox="0 0 17 27"><path d="M1 6l7 7-7 7.500M8.500 6l7 7-7 7.500" fill="none" stroke="#484644" stroke-width="1.400"/></svg></div>
          <div class="vs">${fit("Compilar visual", 104)}</div>
          <div class="modes"><div class="mode"><svg width="32" height="32" viewBox="0 0 32 32"><path d="M1 2h24" stroke="#484644" stroke-width="1.600"/><path d="M1.500 8h29v9.500h-29zM1.500 21.500h29V31h-29z" fill="#117865" stroke="#252423" stroke-width="1.800" stroke-dasharray="2 2"/></svg></div>
            <svg width="32" height="40" viewBox="0 0 32 40"><path d="M6 34H1V5.500h12l8 7M13 5.500V13h8" fill="none" stroke="#484644" stroke-width="1.600"/><path d="M30 16q-10 5-14 12l3 2q8-6 11-14z" fill="#fff" stroke="#484644" stroke-width="1.600"/><path d="M15 28q-5 0-6 6 8 1 9-4z" fill="#8a8886" stroke="#484644" stroke-width="1.500"/></svg>
          </div>
          <svg width="225" height="11" viewBox="0 0 225 11"><path d="M1 10.300H20.500L31 1l10 9.300H225" fill="none" stroke="#a19f9d" stroke-width="1.300"/></svg>
          <div class="grid">${VI.map(i => html`<svg width="24" height="24" viewBox="0 0 24 24">${i}</svg>`)}</div>
          <div class="wells">
            <div class="lab">${fit("Valores", 47)}</div>
            <div class="drop">${fit("Agregar campos de datos a...", 193)}</div>
            <div class="lab h">${fit("Obtener detalles", 112)}</div>
            <div class="opt">${fit("Entre varios informes", 139)}<svg width="40" height="20"><rect x=".7" y=".7" width="38.600" height="18.600" rx="9.300" fill="#fff" stroke="#797775" stroke-width="1.300"/><circle cx="11.500" cy="10" r="5" fill="#605e5c"/></svg></div>
            <div class="opt tall"><div>${fit("Mantener todos los", 129)}<br>${fit("filtros", 37)}</div><svg width="40" height="20"><rect width="40" height="20" rx="10" fill="#c8c6c4"/><circle cx="29" cy="10" r="5" fill="#f3f2f1"/><path d="M9 10l3.500 3.500L19 6.500" fill="none" stroke="#a19f9d" stroke-width="2.500"/></svg></div>
            <div class="stack">${this.item("")}${this.item("Σ")}${this.item("Σ", true)}</div>
          </div>
        </div>
        <div class="fields">
          <div class="fh">${fit("Campos", 73)}</div>
          <div class="search"><svg width="19" height="18" viewBox="0 0 19 18"><circle cx="12" cy="6.500" r="5.700" fill="none" stroke="#605e5c" stroke-width="1.300"/><path d="M8 10.500L1 17" stroke="#605e5c" stroke-width="1.400"/></svg>${fit("Buscar", 50)}</div>
          <div class="list">${FIELDS.map((f, i) => html`<div class="f">
            <svg class="chev" width="9" height="16" viewBox="0 0 9 16"><path d="M1 1l7 7-7 7" fill="none" stroke="#979593" stroke-width="1.400"/></svg>
            <div class="ic">${i === 5
              ? html`<svg width="22" height="20" viewBox="0 0 22 20"><path d="M0 1h16v13H0zM0 4h16M0 7.500h9M0 11h9M5 4v10M10.500 4v3" fill="none" stroke="#484644" stroke-width="1.400"/><rect x="9" y="6" width="11" height="14" fill="#f3f2f1" stroke="#484644" stroke-width="1.300"/><path d="M11.500 9h6v2h-6zM12 14h1.500M15 14h1.500M12 17h1.500M15 17h1.500" fill="none" stroke="#484644"/></svg>`
              : html`<svg width="17" height="16" viewBox="0 0 17 16"><path d="M1 1h15v13.500H1zM1 5h15M1 8.300h15M1 11.500h15M6 5v10M11 5v10" fill="none" stroke="#484644" stroke-width="1.400"/><path d="M1 1.500h15" stroke="#484644" stroke-width="2"/></svg>`}</div>
            ${fit(f[0], f[1])}</div>`)}</div>
        </div>
      </div>
      <div class="frame fr1"></div><div class="frame fr2"></div><div class="frame fr3"></div>`;
  }
}
